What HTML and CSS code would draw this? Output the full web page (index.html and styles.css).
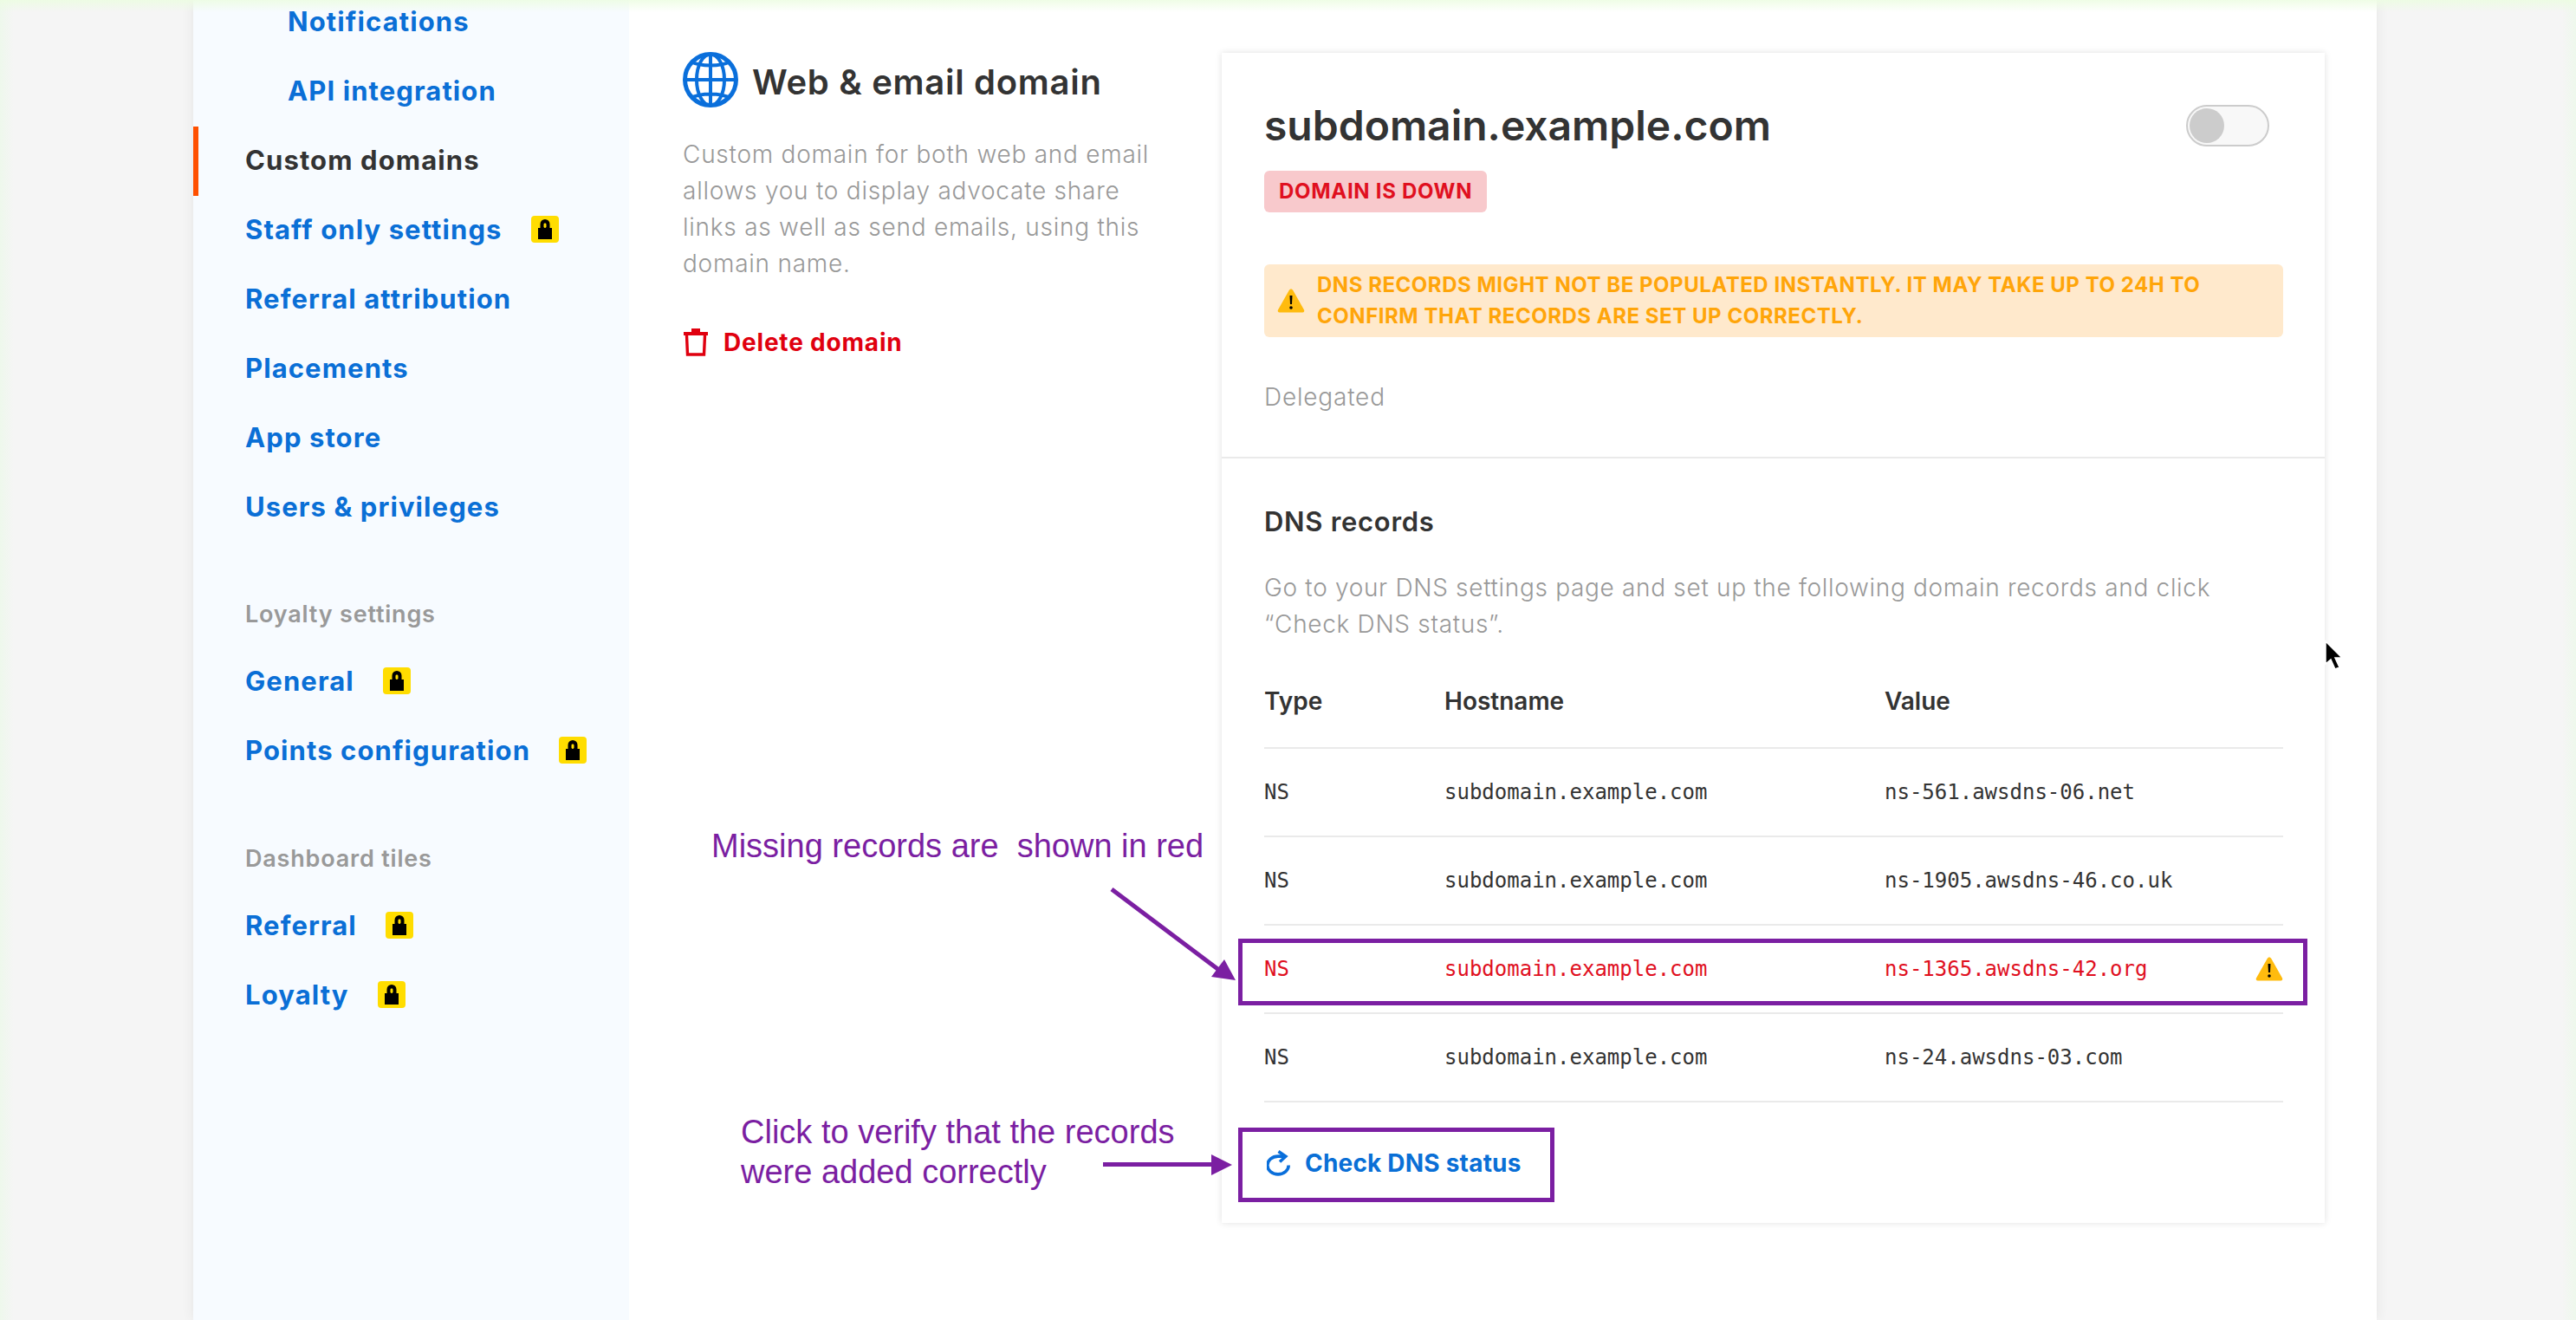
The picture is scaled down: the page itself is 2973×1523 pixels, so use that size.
FILE: index.html
```html
<!DOCTYPE html>
<html lang="en">
<head>
<meta charset="utf-8">
<title>Custom domains</title>
<link rel="stylesheet" href="styles.css">
</head>
<body>
<div class="top-tint"></div>
<div class="shell">
  <aside class="sidebar">
    <nav class="nav">
      <a class="nav-item sub">Notifications</a>
      <a class="nav-item sub">API integration</a>
      <a class="nav-item active">Custom domains</a>
      <a class="nav-item">Staff only settings <svg class="lock" viewBox="0 0 32 31"><rect width="32" height="31" rx="4" fill="#ffdd00"/><path d="M8 14h2.500V9.500a5.500 5.500 0 0 1 11 0V14H24v13H8z" fill="#000"/><rect x="14.500" y="8.500" width="3" height="5.500" rx="1.400" fill="#ffdd00"/></svg></a>
      <a class="nav-item">Referral attribution</a>
      <a class="nav-item">Placements</a>
      <a class="nav-item">App store</a>
      <a class="nav-item">Users &amp; privileges</a>
    </nav>
    <h3 class="nav-head first">Loyalty settings</h3>
    <nav class="nav">
      <a class="nav-item">General <svg class="lock" viewBox="0 0 32 31"><rect width="32" height="31" rx="4" fill="#ffdd00"/><path d="M8 14h2.500V9.500a5.500 5.500 0 0 1 11 0V14H24v13H8z" fill="#000"/><rect x="14.500" y="8.500" width="3" height="5.500" rx="1.400" fill="#ffdd00"/></svg></a>
      <a class="nav-item">Points configuration <svg class="lock" viewBox="0 0 32 31"><rect width="32" height="31" rx="4" fill="#ffdd00"/><path d="M8 14h2.500V9.500a5.500 5.500 0 0 1 11 0V14H24v13H8z" fill="#000"/><rect x="14.500" y="8.500" width="3" height="5.500" rx="1.400" fill="#ffdd00"/></svg></a>
    </nav>
    <h3 class="nav-head">Dashboard tiles</h3>
    <nav class="nav">
      <a class="nav-item">Referral <svg class="lock" viewBox="0 0 32 31"><rect width="32" height="31" rx="4" fill="#ffdd00"/><path d="M8 14h2.500V9.500a5.500 5.500 0 0 1 11 0V14H24v13H8z" fill="#000"/><rect x="14.500" y="8.500" width="3" height="5.500" rx="1.400" fill="#ffdd00"/></svg></a>
      <a class="nav-item">Loyalty <svg class="lock" viewBox="0 0 32 31"><rect width="32" height="31" rx="4" fill="#ffdd00"/><path d="M8 14h2.500V9.500a5.500 5.500 0 0 1 11 0V14H24v13H8z" fill="#000"/><rect x="14.500" y="8.500" width="3" height="5.500" rx="1.400" fill="#ffdd00"/></svg></a>
    </nav>
  </aside>
  <main class="main">
    <section class="intro">
      <header class="intro-head">
        <svg class="globe" viewBox="0 0 64 64" fill="none" stroke="#0a6fdb" stroke-width="4">
          <circle cx="32" cy="32" r="29.500" stroke-width="5"/>
          <ellipse cx="32" cy="32" rx="16" ry="29.500"/>
          <path d="M32 2v60M2 32h60M9 11c12 6 34 6 46 0M9 53c12-6 34-6 46 0"/>
        </svg>
        <h1 class="intro-title">Web &amp; email domain</h1>
      </header>
      <p class="intro-text">Custom domain for both web and email allows you to display advocate share links as well as send emails, using this domain name.</p>
      <a class="delete">
        <svg class="trash" viewBox="0 0 28 32" fill="none"><path d="M9 0h10v4H9zM0 4h28v4H0z" fill="#e0000f"/><path d="M3.500 8l1 22h19l1-22" stroke="#e0000f" stroke-width="3.400"/></svg>
        Delete domain
      </a>
    </section>
    <section class="card">
      <div class="card-top">
        <div class="title-row">
          <h2 class="domain">subdomain.example.com</h2>
          <span class="toggle"><span class="knob"></span></span>
        </div>
        <span class="badge">Domain is down</span>
        <div class="alert">
          <svg class="warn" viewBox="0 0 32 28"><path d="M16 .5c1 0 1.800.6 2.300 1.500L31 24.500c.8 1.500 0 3-1.800 3H2.800c-1.800 0-2.600-1.500-1.800-3L13.700 2c.5-.9 1.300-1.500 2.300-1.500z" fill="#ffbb0e"/><path d="M14.500 8h3l-.5 10h-2z" fill="#000"/><circle cx="16" cy="22" r="1.800" fill="#000"/></svg>
          <p class="alert-text">DNS records might not be populated instantly. It may take up to 24h to confirm that records are set up correctly.</p>
        </div>
        <p class="delegated">Delegated</p>
      </div>
      <div class="card-bottom">
        <h3 class="dns-title">DNS records</h3>
        <p class="dns-text">Go to your DNS settings page and set up the following domain records and click<br>“Check DNS status”.</p>
        <div class="table">
          <div class="row head"><span>Type</span><span>Hostname</span><span>Value</span></div>
          <div class="row"><span>NS</span><span>subdomain.example.com</span><span>ns-561.awsdns-06.net</span></div>
          <div class="row"><span>NS</span><span>subdomain.example.com</span><span>ns-1905.awsdns-46.co.uk</span></div>
          <div class="row missing"><span>NS</span><span>subdomain.example.com</span><span>ns-1365.awsdns-42.org</span>
            <svg class="warn" viewBox="0 0 32 28"><path d="M16 .5c1 0 1.800.6 2.300 1.500L31 24.500c.8 1.500 0 3-1.800 3H2.800c-1.800 0-2.600-1.500-1.800-3L13.700 2c.5-.9 1.300-1.500 2.300-1.500z" fill="#ffbb0e"/><path d="M14.500 8h3l-.5 10h-2z" fill="#000"/><circle cx="16" cy="22" r="1.800" fill="#000"/></svg>
          </div>
          <div class="row"><span>NS</span><span>subdomain.example.com</span><span>ns-24.awsdns-03.com</span></div>
        </div>
        <a class="check">
          <svg class="refresh" viewBox="0 0 28 30" fill="none" stroke="#0a6fdb" stroke-width="3.600"><path d="M25.200 17.500A12.200 10.400 0 1 1 13 7.100H21"/><path d="M13.500 1.500L21.800 7.200L15 13.500"/></svg>
          Check DNS status
        </a>
      </div>
    </section>
  </main>
</div>
<div class="notes">
  <svg class="notes-art" viewBox="0 0 2973 1523" fill="none">
    <g stroke="#7b1fa2" stroke-width="5">
      <rect x="1431.500" y="1085.500" width="1229" height="72"/>
      <rect x="1431.500" y="1303.500" width="360" height="81"/>
      <path d="M1283 1026L1408 1120M1273 1343.500H1400"/>
    </g>
    <path d="M1426 1131L1413 1107L1398 1127zM1422 1344L1398 1332V1356z" fill="#7b1fa2"/>
    <path d="M2684 740v26l6-5 5 11 5-2-5-11h8z" fill="#000" stroke="#fff" stroke-width="1.500"/>
  </svg>
  <p class="note note-missing">Missing records are  shown in red</p>
  <p class="note note-click">Click to verify that the records<br>were added correctly</p>
</div>
</body>
</html>
```
FILE: styles.css
```css
* { box-sizing: border-box; }
html, body { margin: 0; height: 1523px; overflow: hidden; }
body {
  position: relative;
  background: linear-gradient(90deg, #eef8ec 0, #f5f5f5 16px, #f5f5f5 2957px, #eef8ec 2973px);
  font-family: Inter, "Open Sans", sans-serif;
  color: #333;
}
h1, h2, h3, p { margin: 0; }

.top-tint {
  position: absolute;
  inset: 0 0 auto 0;
  height: 14px;
  background: linear-gradient(180deg, rgba(236, 253, 225, .85), rgba(236, 253, 225, 0));
  z-index: 2;
}

.shell {
  display: flex;
  width: 2520px;
  height: 1523px;
  margin-left: 223px;
  background: #fff;
  box-shadow: 0 0 14px rgba(0, 0, 0, .07);
}

/* sidebar */
.sidebar {
  flex: 0 0 503px;
  background: #f7fbff;
}
.sidebar > .nav:first-child { margin-top: -14px; }
.nav { display: flex; flex-direction: column; }
.nav-item {
  display: flex;
  align-items: center;
  gap: 33px;
  height: 80px;
  padding-left: 60px;
  padding-bottom: 3px;
  font-size: 31px;
  font-weight: 700;
  letter-spacing: 1.1px;
  color: #0a6fd6;
}
.nav-item.sub { padding-left: 109px; }
.nav-item.active { padding-left: 54px; border-left: 6px solid #ff5000; color: #333; }
.lock { width: 32px; height: 31px; flex: none; }
.nav-head {
  height: 40px;
  margin: 64px 0 18px;
  padding-left: 60px;
  font-size: 27px;
  line-height: 40px;
  font-weight: 600;
  letter-spacing: .8px;
  color: #999;
}
.nav-head.first { margin-top: 63px; }

/* main */
.main { flex: 1; display: flex; padding-left: 62px; }
.intro { flex: 0 0 622px; padding-top: 60px; }
.intro-head { display: flex; align-items: center; gap: 16px; height: 64px; }
.globe { width: 64px; height: 64px; flex: none; }
.intro-title { margin-top: 4px; font-size: 40px; font-weight: 600; letter-spacing: .7px; color: #333; }
.intro-text {
  width: 550px;
  margin-top: 33px;
  font-size: 28px;
  line-height: 42px;
  font-weight: 300;
  letter-spacing: .75px;
  color: #999;
}
.delete {
  display: flex;
  align-items: center;
  gap: 18px;
  height: 32px;
  margin-top: 54px;
  font-size: 28px;
  font-weight: 700;
  letter-spacing: .8px;
  color: #e0000f;
}
.trash { width: 28px; height: 32px; margin-left: 1px; }

/* card */
.card {
  flex: 0 0 1273px;
  align-self: flex-start;
  margin-top: 61px;
  background: #fff;
  box-shadow: 0 0 8px rgba(0, 0, 0, .12);
}
.card-top { padding: 60px 48px 48px 49px; border-bottom: 2px solid #eaeaea; }
.title-row { display: flex; justify-content: space-between; align-items: center; height: 48px; padding-right: 16px; }
.domain { margin-top: -1px; font-size: 48px; font-weight: 600; color: #333; }
.toggle {
  display: block;
  width: 96px;
  height: 48px;
  padding: 2px;
  border: 2px solid #ccc;
  border-radius: 24px;
  background: #f8f8f8;
}
.knob { display: block; width: 40px; height: 40px; border-radius: 50%; background: #ccc; }
.badge {
  display: inline-block;
  height: 48px;
  margin-top: 28px;
  padding: 0 17px;
  border-radius: 6px;
  background: #f8c9cc;
  font-size: 24px;
  line-height: 48px;
  font-weight: 700;
  letter-spacing: .7px;
  text-transform: uppercase;
  color: #e0101f;
}
.alert {
  display: flex;
  align-items: center;
  gap: 14px;
  height: 84px;
  margin-top: 60px;
  padding-left: 15px;
  border-radius: 6px;
  background: #ffe9cc;
}
.warn { width: 32px; height: 28px; flex: none; }
.alert-text {
  font-size: 24px;
  line-height: 36px;
  font-weight: 700;
  letter-spacing: .53px;
  text-transform: uppercase;
  color: #ffa50a;
}
.delegated { margin-top: 48px; font-size: 28px; line-height: 42px; font-weight: 300; letter-spacing: .8px; color: #999; }

.card-bottom { padding: 52px 48px 53px 49px; }
.dns-title { font-size: 31px; line-height: 42px; font-weight: 600; letter-spacing: .7px; color: #333; }
.dns-text { margin-top: 34px; font-size: 28px; line-height: 42px; font-weight: 300; letter-spacing: .68px; color: #999; }
.table { margin-top: 47px; }
.row {
  display: grid;
  grid-template-columns: 208px 508px 1fr auto;
  align-items: center;
  height: 102px;
  border-bottom: 2px solid #eaeaea;
  font-family: "DejaVu Sans Mono", monospace;
  font-size: 24px;
  color: #333;
}
.row.head {
  height: 76px;
  padding-bottom: 32px;
  font-family: Inter, "Open Sans", sans-serif;
  font-size: 28px;
  font-weight: 600;
}
.row.missing { color: #e0101f; }
.check {
  display: flex;
  align-items: center;
  gap: 16px;
  height: 32px;
  margin-top: 54px;
  padding-left: 3px;
  font-size: 28px;
  font-weight: 700;
  letter-spacing: .2px;
  color: #0a6fd6;
}
.refresh { width: 28px; height: 30px; }

/* annotations drawn over the screenshot */
.notes { position: absolute; inset: 0; z-index: 3; pointer-events: none; }
.notes-art { position: absolute; inset: 0; width: 2973px; height: 1523px; }
.note {
  position: absolute;
  font-family: "Liberation Sans", Arial, sans-serif;
  font-size: 38px;
  line-height: 46px;
  color: #7b1fa2;
  white-space: pre;
}
.note-missing { left: 821px; top: 953px; }
.note-click { left: 855px; top: 1283px; }
```
